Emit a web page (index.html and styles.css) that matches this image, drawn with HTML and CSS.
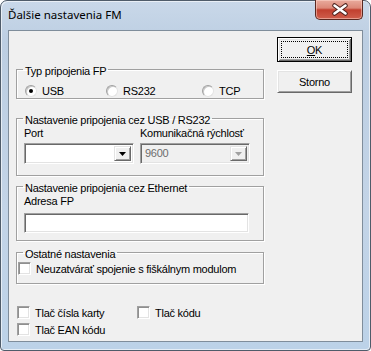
FILE: index.html
```html
<!DOCTYPE html>
<html lang="sk">
<head>
    <meta charset="UTF-8">
    <title>Ďalšie nastavenia FM</title>
    <link rel="stylesheet" href="styles.css">
</head>
<body>

<div class="window">
    <div class="titlebar">
        <span class="title">Ďalšie nastavenia FM</span>
        <div class="close-btn">
            <svg width="46" height="19" viewBox="0 0 46 19">
                <path d="M18.5 5.5 L29.5 13.5 M29.5 5.5 L18.5 13.5" stroke="#4a1f1a" stroke-width="4.6" stroke-linecap="round"/>
                <path d="M18.5 5.5 L29.5 13.5 M29.5 5.5 L18.5 13.5" stroke="#fff" stroke-width="2.6" stroke-linecap="round"/>
            </svg>
        </div>
    </div>

    <div class="client">
        <div class="main">

            <fieldset class="group group-type">
                <legend>Typ pripojenia FP</legend>
                <div class="radios">
                    <label class="radio-item usb"><span class="radio checked"></span>USB</label>
                    <label class="radio-item rs"><span class="radio"></span>RS232</label>
                    <label class="radio-item"><span class="radio"></span>TCP</label>
                </div>
            </fieldset>

            <fieldset class="group group-serial">
                <legend>Nastavenie pripojenia cez USB / RS232</legend>
                <div class="serial-body">
                    <div class="field">
                        <div class="field-label">Port</div>
                        <div class="combo">
                            <div class="combo-value"></div>
                            <div class="combo-btn">
                                <svg width="7" height="4" viewBox="0 0 7 4"><polygon points="0,0 7,0 3.5,4" fill="#000"/></svg>
                            </div>
                        </div>
                    </div>
                    <div class="field">
                        <div class="field-label">Komunikačná rýchlosť</div>
                        <div class="combo disabled">
                            <div class="combo-value">9600</div>
                            <div class="combo-btn">
                                <svg width="7" height="4" viewBox="0 0 7 4"><polygon points="0,0 7,0 3.5,4" fill="#a0a0a0"/></svg>
                            </div>
                        </div>
                    </div>
                </div>
            </fieldset>

            <fieldset class="group group-eth">
                <legend>Nastavenie pripojenia cez Ethernet</legend>
                <div class="eth-body">
                    <div class="field-label">Adresa FP</div>
                    <div class="textbox"></div>
                </div>
            </fieldset>

            <fieldset class="group group-other">
                <legend>Ostatné nastavenia</legend>
                <div class="other-body">
                    <label class="check-item"><span class="checkbox"></span>Neuzatvárať spojenie s fiškálnym modulom</label>
                </div>
            </fieldset>

            <div class="print-checks">
                <label class="check-item"><span class="checkbox"></span>Tlač čísla karty</label>
                <label class="check-item"><span class="checkbox"></span>Tlač kódu</label>
                <label class="check-item"><span class="checkbox"></span>Tlač EAN kódu</label>
            </div>

        </div>

        <div class="buttons">
            <div class="btn btn-default"><span class="focus"><u>O</u>K</span></div>
            <div class="btn">Storno</div>
        </div>
    </div>
</div>

</body>
</html>
```

FILE: styles.css
```css
* {
    margin: 0;
    padding: 0;
    box-sizing: border-box;
}

body {
    background: #fff;
    font-family: "Liberation Sans", Arial, sans-serif;
    font-size: 11px;
    letter-spacing: -0.25px;
    color: #000;
}

/* window frame */

.window {
    width: 371px;
    height: 351px;
    display: flex;
    flex-direction: column;
    padding: 0 7px 8px 7px;
    border: 1px solid #4f5c6a;
    border-radius: 7px 7px 4px 4px;
    background: linear-gradient(180deg, #c9d8e9 0%, #bccee2 12%, #c3d4e7 60%, #bcd2e8 100%);
    box-shadow: inset 1px 1px 0 rgba(255, 255, 255, 0.6), inset -1px -1px 0 rgba(255, 255, 255, 0.6);
}

.titlebar {
    height: 29px;
    display: flex;
    align-items: flex-start;
}

.title {
    font-family: "Noto Sans", "Open Sans", sans-serif;
    font-size: 11.5px;
    letter-spacing: 0;
    line-height: 16px;
    padding-top: 6px;
    color: #000;
}

.close-btn {
    margin-left: auto;
    margin-top: -1px;
    width: 48px;
    height: 20px;
    border: 1px solid #5a2820;
    border-top: none;
    border-radius: 0 0 5px 5px;
    background: linear-gradient(180deg, #e9ab9d 0%, #dc8878 42%, #c1402f 52%, #cf5e4c 100%);
    box-shadow: inset 0 0 0 1px rgba(255, 220, 210, 0.5);
}

.close-btn svg {
    display: block;
}

.client {
    flex: 1;
    display: flex;
    gap: 13px;
    padding: 6px 9px 0 7px;
    background: #f0f0f0;
    border: 1px solid #7f8d9b;
}

.main {
    width: 248px;
}

/* group boxes */

.group {
    border: 1px solid #a0a0a0;
    box-shadow: inset 1px 1px 0 #fff, 1px 1px 0 #fff;
    padding: 0;
    min-width: 0;
}

.group legend {
    margin-left: 6px;
    padding: 4px 2px 0 2px;
    line-height: 13px;
}

.group-type {
    margin-top: 24px;
}

.group-serial {
    margin-top: 11px;
}

.group-eth {
    margin-top: 2px;
}

.group-other {
    margin-top: 3px;
}

.radios {
    display: flex;
    padding: 6px 0 0 8px;
    height: 20px;
}

.radio-item {
    display: flex;
    align-items: center;
    gap: 5px;
    height: 14px;
}

.radio-item.usb {
    width: 81px;
}

.radio-item.rs {
    width: 96px;
}

.radio {
    width: 12px;
    height: 12px;
    border-radius: 50%;
    background: #fff;
    border: 1px solid;
    border-color: #a0a0a0 #e3e3e3 #e3e3e3 #a0a0a0;
    box-shadow: inset 1px 1px 0 #c8c8c8;
    display: flex;
    align-items: center;
    justify-content: center;
}

.radio.checked::after {
    content: "";
    width: 4px;
    height: 4px;
    border-radius: 50%;
    background: #000;
}

.serial-body {
    display: grid;
    grid-template-columns: 110px 110px;
    column-gap: 6px;
    padding: 0 7px 11px 7px;
}

.field-label {
    line-height: 13px;
    white-space: nowrap;
}

.combo {
    display: flex;
    margin-top: 3px;
    height: 21px;
    padding: 2px;
    background: #fff;
    border: 1px solid;
    border-color: #a0a0a0 #fff #fff #a0a0a0;
    box-shadow: inset 1px 1px 0 #696969, inset -1px -1px 0 #e3e3e3;
}

.combo-value {
    flex: 1;
    line-height: 15px;
    padding-left: 2px;
}

.combo.disabled {
    background: #f0f0f0;
    color: #6d6d6d;
}

.combo-btn {
    width: 17px;
    background: #f0f0f0;
    border: 1px solid;
    border-color: #e3e3e3 #696969 #696969 #e3e3e3;
    box-shadow: inset 1px 1px 0 #fff, inset -1px -1px 0 #a0a0a0;
    display: flex;
    align-items: center;
    justify-content: center;
}

.combo-btn svg {
    display: block;
}

.eth-body {
    padding: 0 7px 7px 7px;
}

.textbox {
    margin-top: 5px;
    width: 225px;
    height: 20px;
    background: #fff;
    border: 1px solid;
    border-color: #a0a0a0 #fff #fff #a0a0a0;
    box-shadow: inset 1px 1px 0 #696969, inset -1px -1px 0 #e3e3e3;
}

.other-body {
    padding: 1px 0 8px 1px;
}

.check-item {
    display: flex;
    align-items: center;
    gap: 5px;
    height: 13px;
    white-space: nowrap;
}

.checkbox {
    flex: 0 0 13px;
    width: 13px;
    height: 13px;
    background: #fff;
    border: 1px solid;
    border-color: #a0a0a0 #fff #fff #a0a0a0;
    box-shadow: inset 1px 1px 0 #8f8f8f, inset -1px -1px 0 #e3e3e3;
}

.print-checks {
    display: grid;
    grid-template-columns: 120px 120px;
    row-gap: 4px;
    margin-top: 22px;
    padding-left: 1px;
}

/* buttons */

.buttons {
    width: 75px;
    display: flex;
    flex-direction: column;
    gap: 8px;
}

.btn {
    height: 23px;
    display: flex;
    align-items: center;
    justify-content: center;
    background: #f0f0f0;
    border: 1px solid;
    border-color: #fff #696969 #696969 #fff;
    box-shadow: inset 1px 1px 0 #e3e3e3, inset -1px -1px 0 #a0a0a0;
}

.btn-default {
    height: 25px;
    border: 1px solid #000;
    box-shadow: inset 1px 1px 0 #fff, inset -1px -1px 0 #696969, inset 2px 2px 0 #e3e3e3, inset -2px -2px 0 #a0a0a0;
    padding: 3px;
    align-items: stretch;
}

.btn-default .focus {
    flex: 1;
    display: flex;
    align-items: center;
    justify-content: center;
    border: 1px dotted #000;
}
```
